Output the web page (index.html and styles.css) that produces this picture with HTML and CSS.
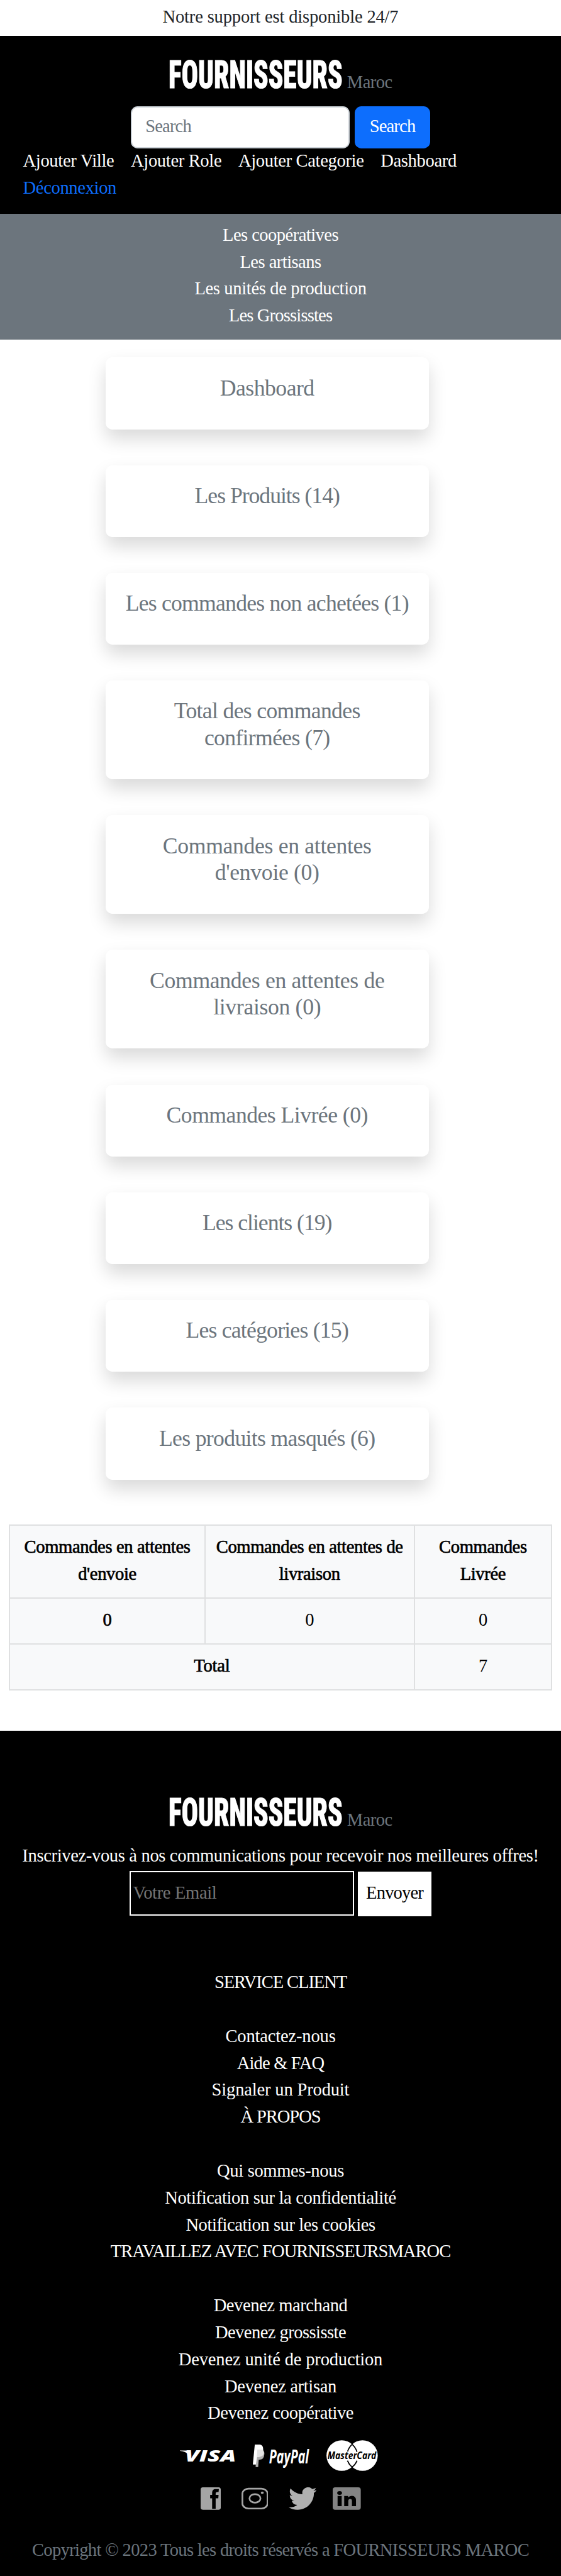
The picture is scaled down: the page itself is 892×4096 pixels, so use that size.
FILE: index.html
```html
<!DOCTYPE html>
<html lang="fr">
<head>
<meta charset="utf-8">
<title>Fournisseurs Maroc</title>
<link rel="stylesheet" href="styles.css">
</head>
<body>
<p class="support ls-0">Notre support est disponible 24/7</p>

<header class="header">
  <svg class="brand" viewBox="0 0 400 60">
    <text class="brand-name" x="-1" y="51.300" textLength="310" lengthAdjust="spacingAndGlyphs">FOURNISSEURS</text>
    <text class="brand-country" x="317" y="52">Maroc</text>
  </svg>
  <form class="search">
    <input class="search-input ls-3" type="text" placeholder="Search">
    <button class="search-button ls-3" type="button">Search</button>
  </form>
  <nav class="nav">
    <a class="nav-link">Ajouter Ville</a>
    <a class="nav-link">Ajouter Role</a>
    <a class="nav-link">Ajouter Categorie</a>
    <a class="nav-link">Dashboard</a>
    <a class="nav-link nav-logout">Déconnexion</a>
  </nav>
</header>

<nav class="categories">
  <a class="ls-2">Les coopératives</a>
  <a class="ls-2">Les artisans</a>
  <a>Les unités de production</a>
  <a class="ls-3">Les Grossisstes</a>
</nav>

<main class="main">
  <div class="cards">
    <a class="card ls-1">Dashboard</a>
    <a class="card ls-3">Les Produits (14)</a>
    <a class="card">Les commandes non achetées (1)</a>
    <a class="card ls-2">Total des commandes<br>confirmées (7)</a>
    <a class="card ls-00">Commandes en attentes<br>d'envoie (0)</a>
    <a class="card ls-00">Commandes en attentes de<br>livraison (0)</a>
    <a class="card ls-1">Commandes Livrée (0)</a>
    <a class="card ls-3">Les clients (19)</a>
    <a class="card">Les catégories (15)</a>
    <a class="card ls-2">Les produits masqués (6)</a>
  </div>

  <table class="table">
    <colgroup><col class="col-a"><col class="col-b"><col class="col-c"></colgroup>
    <tr class="row-head"><th>Commandes en attentes<br>d'envoie</th><th>Commandes en attentes de<br>livraison</th><th>Commandes<br>Livrée</th></tr>
    <tr class="row"><th>0</th><td>0</td><td>0</td></tr>
    <tr class="row"><th class="ls-0" colspan="2">Total</th><td>7</td></tr>
  </table>
</main>

<footer class="footer">
  <svg class="brand" viewBox="0 0 400 60">
    <text class="brand-name" x="-1" y="51.300" textLength="310" lengthAdjust="spacingAndGlyphs">FOURNISSEURS</text>
    <text class="brand-country" x="317" y="52">Maroc</text>
  </svg>
  <p class="newsletter-text">Inscrivez-vous à nos communications pour recevoir nos meilleures offres!</p>
  <form class="newsletter">
    <input class="email-input" type="text" placeholder="Votre Email">
    <button class="email-button ls-3" type="button">Envoyer</button>
  </form>

  <div class="links">
    <h6 class="ls-4">SERVICE CLIENT</h6>
    <a class="ls-0">Contactez-nous</a>
    <a class="ls-3">Aide &amp; FAQ</a>
    <a class="ls-0">Signaler un Produit</a>
    <h6 class="ls-4">À PROPOS</h6>
    <a>Qui sommes-nous</a>
    <a>Notification sur la confidentialité</a>
    <a class="ls-1">Notification sur les cookies</a>
    <h6 class="ls-4b">TRAVAILLEZ AVEC FOURNISSEURSMAROC</h6>
    <a class="ls-1">Devenez marchand</a>
    <a class="ls-2">Devenez grossisste</a>
    <a class="ls-0">Devenez unité de production</a>
    <a>Devenez artisan</a>
    <a class="ls-1">Devenez coopérative</a>
  </div>

  <div class="payments">
    <svg class="visa" viewBox="0 0 100 20">
      <path d="M0 .6H12Q16 .8 17 4L19 10L15 8Q11 2.500 0 1.200Z" fill="#fff"/>
      <text class="visa-text" x="9" y="20" textLength="91" lengthAdjust="spacingAndGlyphs">VISA</text>
    </svg>
    <svg class="paypal" viewBox="0 0 100 40">
      <path d="M6.500 9H16Q21 11 20.500 17Q20 27 12 27H10.500L9.500 40H5Z" fill="#b0b0b0"/>
      <path d="M3.500 0H13Q19 1 18.500 10Q18 22 10 22H7.500L5.500 35.500H0Z" fill="#fff"/>
      <path d="M8 9H16Q20.500 11 19.500 16Q18 22 10 22H7Z" fill="#e2e2e2"/>
      <text class="paypal-text" x="29" y="34" textLength="71" lengthAdjust="spacingAndGlyphs">PayPal</text>
    </svg>
    <svg class="mastercard" viewBox="0 0 92 55">
      <circle cx="27.300" cy="27.500" r="27.200" fill="#fff"/>
      <circle cx="64.300" cy="27.500" r="27.200" fill="#fff"/>
      <path d="M45.800 7.500Q40 13 37.500 21M45.800 7.500Q52 13 54.500 21M45.800 48Q40 43 37.500 36.500M45.800 48Q52 43 54.500 36.500" fill="none" stroke="#000" stroke-width="2"/>
      <text class="mastercard-text" x="2" y="34" textLength="87" lengthAdjust="spacingAndGlyphs">MasterCard</text>
    </svg>
  </div>

  <div class="social">
    <svg class="facebook" viewBox="0 0 36 40">
      <rect width="36" height="40" rx="4" fill="#a5a5a5"/>
      <path d="M20.500 38V19.500H17V13.500H20.500V10C20.500 5 23 3 27 3H32.500L32 8.500H29.500C27.500 8.500 26.800 9.500 26.800 11.500V13.500H32L31.500 19.500H26.800V38Z" fill="#000"/>
    </svg>
    <svg class="instagram" viewBox="0 0 48 40">
      <g fill="none" stroke="#a5a5a5"><rect x="1.600" y="2.400" width="44.800" height="35.400" rx="11" ry="9" stroke-width="3"/><ellipse cx="24" cy="19.700" rx="9.800" ry="7.600" stroke-width="3"/></g>
      <ellipse cx="37" cy="9.700" rx="2.600" ry="2" fill="#a5a5a5"/>
    </svg>
    <svg class="twitter" viewBox="0 2.25 24 19.5" preserveAspectRatio="none">
      <path fill="#b0b0b0" d="M23.953 4.570a10 10 0 01-2.825.775 4.958 4.958 0 002.163-2.723c-.951.555-2.005.959-3.127 1.184a4.920 4.920 0 00-8.384 4.482C7.690 8.095 4.067 6.130 1.640 3.162a4.822 4.822 0 00-.666 2.475c0 1.710.87 3.213 2.188 4.096a4.904 4.904 0 01-2.228-.616v.06a4.923 4.923 0 003.946 4.827 4.996 4.996 0 01-2.212.085 4.936 4.936 0 004.604 3.417 9.867 9.867 0 01-6.102 2.105c-.39 0-.779-.023-1.170-.067a13.995 13.995 0 007.557 2.209c9.053 0 13.998-7.496 13.998-13.985 0-.21 0-.42-.015-.63A9.935 9.935 0 0024 4.590z"/>
    </svg>
    <svg class="linkedin" viewBox="0 0 50 40">
      <rect width="50" height="40" rx="4.500" fill="#848484"/>
      <g fill="#000"><ellipse cx="12.300" cy="10" rx="4.300" ry="3.400"/><path d="M8.700 15.500H16V33.500H8.700ZM20.500 15.500H27.500V18Q30 15 34.200 15Q41.500 15.300 41.500 23V33.500H34.300V24.500Q34.300 20.700 31.200 20.700Q27.800 20.700 27.800 24.500V33.500H20.500Z"/></g>
    </svg>
  </div>

  <p class="copyright">Copyright © 2023 Tous les droits réservés a FOURNISSEURS MAROC</p>
</footer>
</body>
</html>
```
FILE: styles.css
```css
:root {
  --u: 0.8923px;
}

* {
  box-sizing: border-box;
}

body {
  margin: 0;
  background: #fff;
  color: #212529;
  font-family: "Liberation Serif", "Times New Roman", serif;
  font-size: calc(32 * var(--u));
  line-height: calc(48 * var(--u));
  letter-spacing: -0.012em;
  white-space: nowrap;
}

p,
h6,
form {
  margin: 0;
}

svg {
  display: block;
  flex: none;
}

/* tracking steps */
.ls-00.ls-00 { letter-spacing: -0.0095em; }
.ls-0.ls-0 { letter-spacing: -0.006em; }
.ls-1.ls-1 { letter-spacing: -0.015em; }
.ls-2.ls-2 { letter-spacing: -0.019em; }
.ls-3.ls-3 { letter-spacing: -0.029em; }
.ls-4.ls-4 { letter-spacing: -0.038em; }
.ls-4b.ls-4b { letter-spacing: -0.034em; }

.support {
  height: calc(64 * var(--u));
  padding-top: calc(6.4 * var(--u));
  text-align: center;
}

/* brand */
.brand {
  width: calc(400 * var(--u));
  height: calc(60 * var(--u));
  margin-left: calc(302 * var(--u));
  overflow: visible;
}

.brand-name {
  fill: #fff;
  stroke: #fff;
  stroke-width: 1.4px;
  font: 800 68px/1 Roboto, sans-serif;
  font-stretch: 75%;
  letter-spacing: 0;
}

.brand-country {
  fill: #6c757d;
  font-size: 32px;
  letter-spacing: -0.018em;
}

/* header */
.header {
  height: calc(317 * var(--u));
  padding-top: calc(41 * var(--u));
  background: #000;
}

.search {
  display: flex;
  justify-content: center;
  gap: calc(9 * var(--u));
  margin-top: calc(24 * var(--u));
}

.search-input,
.search-button,
.email-input,
.email-button {
  margin: 0;
  font-family: inherit;
  font-size: inherit;
  letter-spacing: inherit;
}

.search-input {
  width: calc(390 * var(--u));
  height: calc(76 * var(--u));
  padding: 0 calc(24 * var(--u)) calc(3 * var(--u));
  border: 2px solid #ced4da;
  border-radius: calc(12 * var(--u));
  background: #fff;
}

.search-input::placeholder {
  color: #6c757d;
}

.search-button {
  width: calc(135 * var(--u));
  height: calc(76 * var(--u));
  padding: 0 0 calc(3 * var(--u));
  border: 0;
  border-radius: calc(12 * var(--u));
  background: #0d6efd;
  color: #fff;
}

.nav {
  display: flex;
  flex-wrap: wrap;
  column-gap: calc(30 * var(--u));
  margin-top: calc(-1.6 * var(--u));
  padding: 0 calc(41 * var(--u));
}

.nav-link {
  color: #fff;
}

.nav-logout {
  color: #0d6efd;
}

.categories {
  display: flex;
  flex-direction: column;
  align-items: center;
  height: calc(224 * var(--u));
  padding-top: calc(14.4 * var(--u));
  background: #6c757d;
  color: #fff;
}

/* dashboard */
.main {
  padding: calc(32 * var(--u)) calc(16 * var(--u)) calc(72 * var(--u));
}

.cards {
  display: flex;
  flex-direction: column;
  gap: calc(64 * var(--u));
  width: calc(576 * var(--u));
  margin-left: calc(172 * var(--u));
}

.card {
  padding: calc(30.5 * var(--u)) 0 calc(49.5 * var(--u));
  border-radius: calc(12 * var(--u));
  background: #fff;
  box-shadow: 0 calc(16 * var(--u)) calc(32 * var(--u)) rgba(0, 0, 0, 0.15);
  color: #6c757d;
  font-size: calc(40 * var(--u));
  letter-spacing: -0.022em;
  text-align: center;
}

.table {
  width: calc(968 * var(--u));
  margin-top: calc(80 * var(--u));
  border-collapse: collapse;
  table-layout: fixed;
  background: #f8f9fa;
  color: #000;
  text-align: center;
}

.col-a { width: calc(348 * var(--u)); }
.col-b { width: calc(373 * var(--u)); }
.col-c { width: calc(245 * var(--u)); }

.row-head { height: calc(130 * var(--u)); }
.row { height: calc(82 * var(--u)); }

.table th,
.table td {
  padding: calc(14.3 * var(--u)) 0 0;
  border: 2px solid #dfe0e1;
  vertical-align: top;
}

.table th {
  font-weight: 400;
  -webkit-text-stroke: 0.7px #000;
}

/* footer */
.footer {
  padding: calc(117 * var(--u)) 0 calc(21.5 * var(--u));
  background: #000;
  color: #fff;
  text-align: center;
}

.newsletter-text {
  margin-top: calc(22.4 * var(--u));
}

.newsletter {
  display: flex;
  justify-content: center;
  gap: calc(7 * var(--u));
  height: calc(81 * var(--u));
  margin-top: calc(1.6 * var(--u));
}

.email-input {
  width: calc(400 * var(--u));
  height: calc(80 * var(--u));
  padding: 0 calc(4 * var(--u)) 1px;
  border: 2px solid #fff;
  border-radius: 0;
  background: #000;
}

.email-input::placeholder {
  color: #757575;
}

.email-button {
  align-self: flex-end;
  width: calc(131 * var(--u));
  height: calc(80 * var(--u));
  padding: 0 0 calc(3 * var(--u));
  border: 0;
  background: #fff;
  color: #000;
}

.links {
  display: flex;
  flex-direction: column;
  align-items: center;
  margin-top: calc(94.4 * var(--u));
}

.links h6 {
  margin-bottom: calc(48 * var(--u));
  font-size: inherit;
  font-weight: 400;
}

.payments {
  display: flex;
  align-items: center;
  height: calc(55 * var(--u));
  margin: calc(23.6 * var(--u)) 0 0 calc(321 * var(--u));
}

.visa {
  width: calc(100 * var(--u));
  height: calc(20 * var(--u));
  overflow: visible;
}

.visa-text {
  fill: #fff;
  font: italic 800 28px "Open Sans", sans-serif;
  letter-spacing: 0;
}

.paypal {
  width: calc(100 * var(--u));
  height: calc(40 * var(--u));
  margin: 0 calc(32 * var(--u)) 0 calc(29 * var(--u));
  overflow: visible;
}

.paypal-text {
  fill: #fff;
  font: italic 700 34px "Open Sans", sans-serif;
  letter-spacing: 0;
}

.mastercard {
  width: calc(92 * var(--u));
  height: calc(55 * var(--u));
  overflow: visible;
}

.mastercard-text {
  fill: #000;
  stroke: #fff;
  stroke-width: 2px;
  paint-order: stroke;
  font: italic 700 17px "Open Sans", sans-serif;
  letter-spacing: 0;
}

.social {
  display: flex;
  height: calc(40 * var(--u));
  margin: calc(29 * var(--u)) 0 0 calc(357 * var(--u));
}

.social svg {
  height: 100%;
}

.facebook { width: calc(36 * var(--u)); }

.instagram {
  width: calc(48 * var(--u));
  margin-left: calc(37 * var(--u));
}

.twitter {
  width: calc(50 * var(--u));
  margin-left: calc(36 * var(--u));
}

.linkedin {
  width: calc(50 * var(--u));
  margin-left: calc(29 * var(--u));
}

.copyright {
  margin-top: calc(48.4 * var(--u));
  color: #6c757d;
  letter-spacing: -0.0237em;
}
```
